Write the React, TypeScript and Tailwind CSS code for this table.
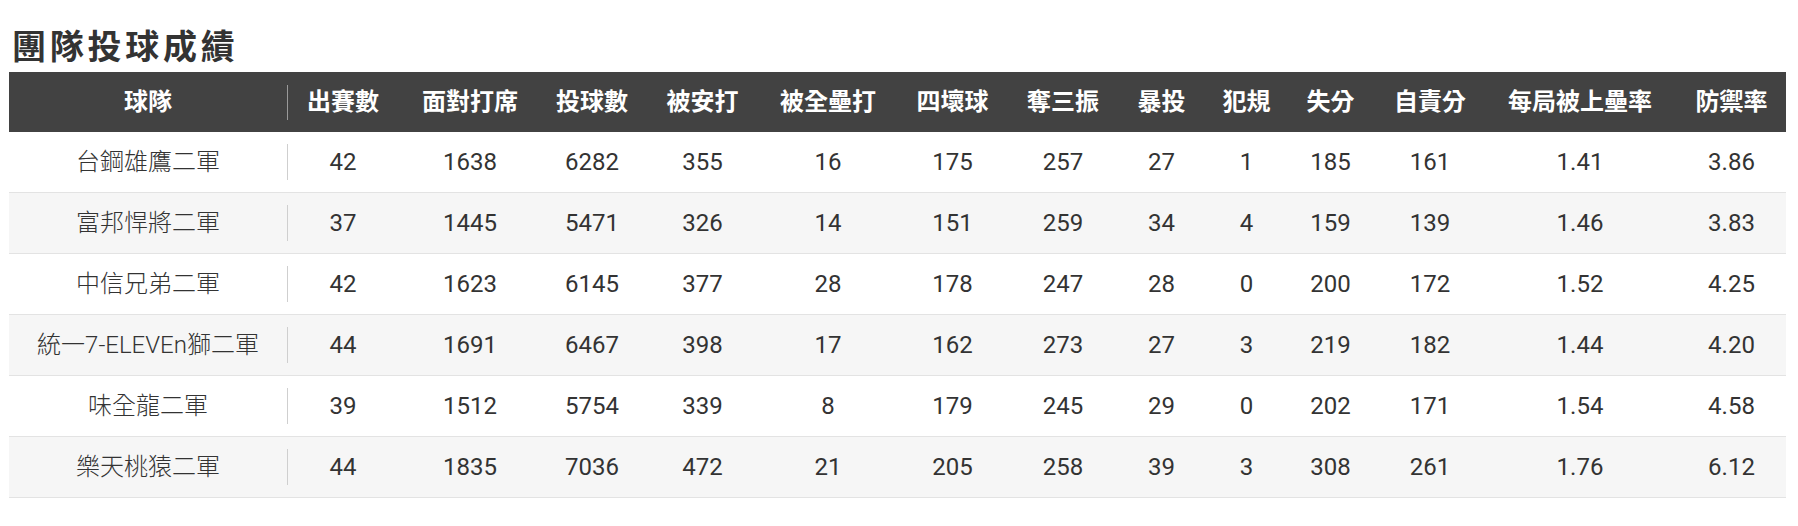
const headers = [
  '出賽數',
  '面對打席',
  '投球數',
  '被安打',
  '被全壘打',
  '四壞球',
  '奪三振',
  '暴投',
  '犯規',
  '失分',
  '自責分',
  '每局被上壘率',
  '防禦率',
];

const rows: [string, ...string[]][] = [
  ['台鋼雄鷹二軍', '42', '1638', '6282', '355', '16', '175', '257', '27', '1', '185', '161', '1.41', '3.86'],
  ['富邦悍將二軍', '37', '1445', '5471', '326', '14', '151', '259', '34', '4', '159', '139', '1.46', '3.83'],
  ['中信兄弟二軍', '42', '1623', '6145', '377', '28', '178', '247', '28', '0', '200', '172', '1.52', '4.25'],
  ['統一7-ELEVEn獅二軍', '44', '1691', '6467', '398', '17', '162', '273', '27', '3', '219', '182', '1.44', '4.20'],
  ['味全龍二軍', '39', '1512', '5754', '339', '8', '179', '245', '29', '0', '202', '171', '1.54', '4.58'],
  ['樂天桃猿二軍', '44', '1835', '7036', '472', '21', '205', '258', '39', '3', '308', '261', '1.76', '6.12'],
];

const grid =
  'grid grid-cols-[279px_110px_144px_100px_121px_130px_119px_102px_95px_75px_93px_106px_194px_109px]';

const TeamCell = ({ label, head }: { label: string; head?: boolean }) => (
  <div className="flex items-center">
    <div className={head ? 'flex-1 text-center font-bold' : 'flex-1 text-center font-light'}>{label}</div>
    <div className={head ? 'h-[35px] w-px bg-[#9a9a9a]' : 'h-9 w-px bg-[#cfcfcf]'} />
  </div>
);

export default function App() {
  return (
    <div className="min-h-[526px] bg-white pl-[9px] pt-[27px] font-['Roboto','Noto_Sans_CJK_TC',sans-serif]">
      <h2 className="pl-[3px] text-[34px] font-semibold leading-[40px] tracking-[0.11em] text-[#333]">
        團隊投球成績
      </h2>
      <div className="mt-[5px] w-[1777px] text-[24px]">
        <div className={`${grid} h-[60px] bg-[#424242] text-white`}>
          <TeamCell label="球隊" head />
          {headers.map((h) => (
            <div key={h} className="flex items-center justify-center font-bold">
              {h}
            </div>
          ))}
        </div>
        {rows.map(([team, ...stats], i) => (
          <div
            key={team}
            className={`${grid} h-[61px] border-b border-[#e3e3e3] text-[#333] ${
              i % 2 === 1 ? 'bg-[#f6f6f6]' : 'bg-white'
            }`}
          >
            <TeamCell label={team} />
            {stats.map((s, j) => (
              <div key={j} className="flex items-center justify-center">
                {s}
              </div>
            ))}
          </div>
        ))}
      </div>
    </div>
  );
}
